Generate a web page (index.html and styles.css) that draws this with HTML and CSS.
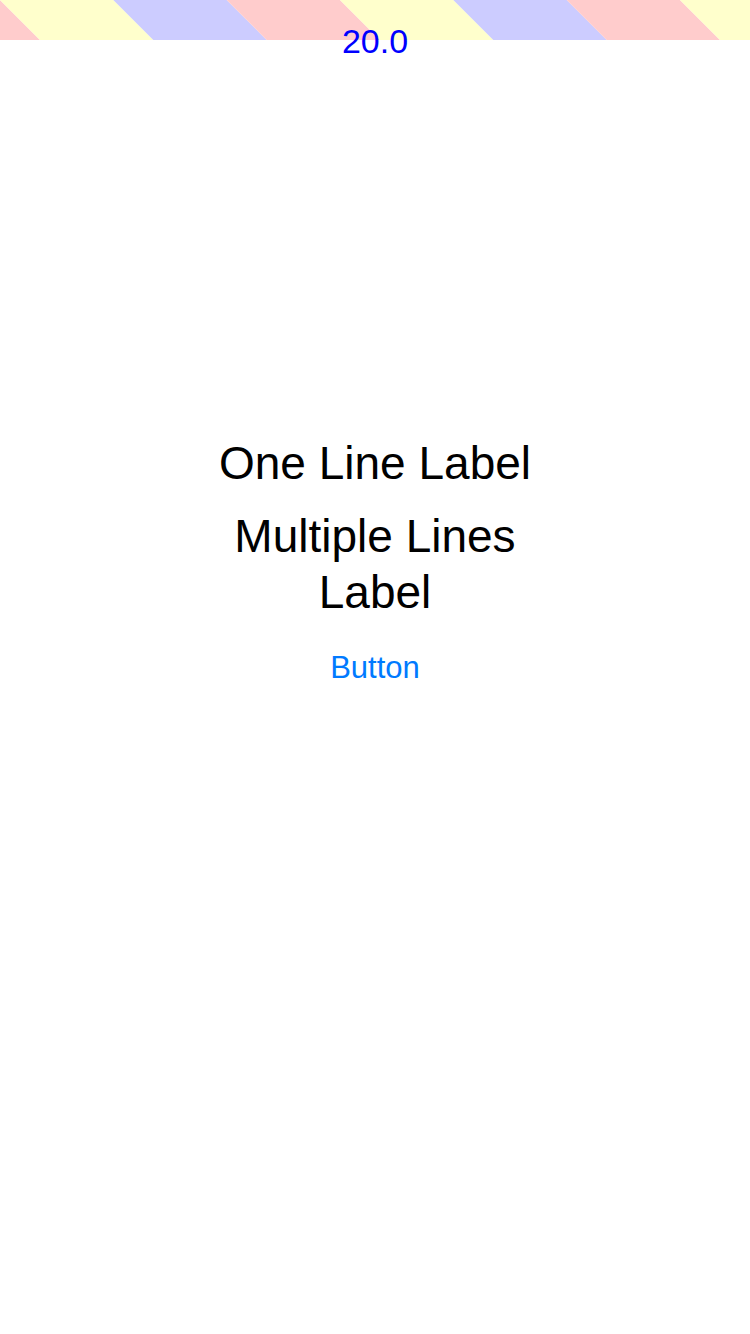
FILE: index.html
```html
<!DOCTYPE html>
<html lang="en">
<head>
<meta charset="utf-8">
<title>Labels</title>
<link rel="stylesheet" href="styles.css">
</head>
<body>
<header class="top">
  <svg class="stripes" viewBox="0 0 750 40" preserveAspectRatio="none" aria-hidden="true">
    <polygon fill="#FFCCCC" points="-113.33,0 0,0 40,40 -73.33,40"/>
    <polygon fill="#FFFFCC" points="0,0 113.33,0 153.33,40 40,40"/>
    <polygon fill="#CCCCFF" points="113.33,0 226.67,0 266.67,40 153.33,40"/>
    <polygon fill="#FFCCCC" points="226.67,0 340,0 380,40 266.67,40"/>
    <polygon fill="#FFFFCC" points="340,0 453.33,0 493.33,40 380,40"/>
    <polygon fill="#CCCCFF" points="453.33,0 566.67,0 606.67,40 493.33,40"/>
    <polygon fill="#FFCCCC" points="566.67,0 680,0 720,40 606.67,40"/>
    <polygon fill="#FFFFCC" points="680,0 793.33,0 833.33,40 720,40"/>
  </svg>
  <div class="version">20.0</div>
</header>
<main class="content">
  <div class="label one">One Line Label</div>
  <div class="label multi">Multiple Lines Label</div>
  <button class="btn" type="button">Button</button>
</main>
</body>
</html>
```

FILE: styles.css
```css
html, body {
  margin: 0;
  padding: 0;
  background: #FFFFFF;
}
body {
  width: 750px;
  height: 1334px;
  font-family: "Liberation Sans", Arial, sans-serif;
  overflow: hidden;
}
.top {
  position: relative;
  height: 40px;
}
.stripes {
  display: block;
  width: 100%;
  height: 40px;
}
.version {
  position: absolute;
  left: 0;
  right: 0;
  top: 25px;
  text-align: center;
  font-size: 34px;
  line-height: 32px;
  color: #0000FF;
}
.content {
  display: flex;
  flex-direction: column;
  align-items: center;
  padding-top: 395px;
}
.label {
  font-size: 46px;
  line-height: 56px;
  color: #000000;
  text-align: center;
}
.multi {
  width: 300px;
  margin-top: 17px;
}
.btn {
  margin-top: 30px;
  padding: 0;
  border: 0;
  background: transparent;
  font-family: inherit;
  font-size: 31px;
  line-height: 36px;
  color: #007AFF;
  cursor: pointer;
}
```
